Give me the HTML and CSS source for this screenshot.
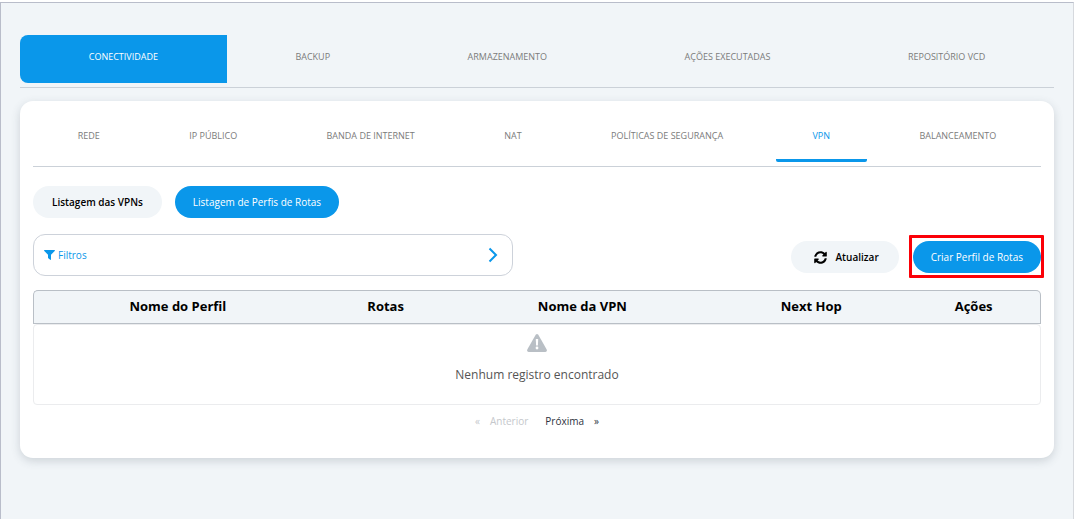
FILE: index.html
```
<!DOCTYPE html>
<html lang="pt-BR">
<head>
    <meta charset="UTF-8">
    <title>Perfis de Rotas</title>
    <link rel="stylesheet" href="styles.css">
</head>

<body>
    <main class="page">
        <nav class="main-tabs">
            <a class="active" href="#">CONECTIVIDADE</a>
            <a href="#">BACKUP</a>
            <a href="#">ARMAZENAMENTO</a>
            <a href="#">AÇÕES EXECUTADAS</a>
            <a href="#">REPOSITÓRIO VCD</a>
        </nav>

        <section class="card">
            <nav class="sub-tabs">
                <a href="#">REDE</a>
                <a href="#">IP PÚBLICO</a>
                <a href="#">BANDA DE INTERNET</a>
                <a href="#">NAT</a>
                <a href="#">POLÍTICAS DE SEGURANÇA</a>
                <a class="active" href="#">VPN</a>
                <a href="#">BALANCEAMENTO</a>
            </nav>

            <div class="lists">
                <button class="btn" type="button">Listagem das VPNs</button>
                <button class="btn btn-blue" type="button">Listagem de Perfis de Rotas</button>
            </div>

            <div class="toolbar">
                <button class="filter" type="button">
                    <svg width="11" height="10" viewBox="0 0 11 10"><path d="M.5 0h10q.8.3.2 1L7 4.800V9.500q-.2.700-.8.300L4.300 8.300Q4 8 4 7.600V4.800L.300 1Q-.3.300.500 0z" fill="currentColor"/></svg>
                    <span>Filtros</span>
                    <svg class="arrow" width="10" height="16" viewBox="0 0 10 16"><path d="M1.500 1.500L8 8l-6.500 6.500" fill="none" stroke="currentColor" stroke-width="2"/></svg>
                </button>
                <div class="actions">
                    <button class="btn btn-refresh" type="button">
                        <svg width="13" height="13" viewBox="0 0 512 512"><path fill="currentColor" d="M370.700 133.300C339.500 104 298.900 88 255.800 88c-77.500.1-144.300 53.200-162.800 126.900-1.300 5.400-6.100 9.100-11.700 9.100H24.100c-7.500 0-13.200-6.800-11.800-14.200C33.900 94.900 134.800 8 256 8c66.400 0 126.800 26.100 171.300 68.700L463 41c15.100-15.100 41-4.400 41 17v134c0 13.300-10.700 24-24 24H346c-21.400 0-32.100-25.900-17-41l41.700-41.700zM32 296h134c21.400 0 32.100 25.900 17 41l-41.800 41.800c31.300 29.300 71.800 45.300 114.900 45.300 77.400-.1 144.300-53.100 162.800-126.800 1.300-5.400 6.100-9.100 11.700-9.100h57.300c7.500 0 13.200 6.800 11.800 14.200C478.100 417.100 377.200 504 256 504c-66.400 0-126.800-26.100-171.300-68.700L49 471c-15.100 15.100-41 4.400-41-17V320c0-13.300 10.700-24 24-24z"/></svg>
                        Atualizar
                    </button>
                    <div class="highlight">
                        <button class="btn btn-blue" type="button">Criar Perfil de Rotas</button>
                    </div>
                </div>
            </div>

            <table class="profiles">
                <thead>
                    <tr>
                        <th>Nome do Perfil</th>
                        <th>Rotas</th>
                        <th>Nome da VPN</th>
                        <th>Next Hop</th>
                        <th>Ações</th>
                    </tr>
                </thead>
                <tbody>
                    <tr>
                        <td colspan="5">
                            <svg class="warning" width="20" height="18" viewBox="0 0 20 18"><path d="M8.700.8Q10-.7 11.300.8L19.700 15.500Q20.400 17.500 18.400 18H1.600Q-.4 17.500.300 15.500z" fill="#b9bfc5"/><path d="M8.800 5h2.400l-.3 6.500H9.100z" fill="#fff"/><circle cx="10" cy="14" r="1.400" fill="#fff"/></svg>
                            <p>Nenhum registro encontrado</p>
                        </td>
                    </tr>
                </tbody>
            </table>

            <div class="pager">
                <button type="button" disabled><span>«</span>Anterior</button>
                <button type="button">Próxima<span>»</span></button>
            </div>
        </section>
    </main>
</body>

</html>
```
FILE: styles.css
```
* {
    box-sizing: border-box;
}

body {
    margin: 0;
    padding: 2px 1px 0 0;
    min-height: 100vh;
    display: flex;
    background: #fff;
    font-family: "Open Sans", "Noto Sans", sans-serif;
    color: #000;
}

.page {
    flex: 1;
    padding: 32px 19px;
    background: #f1f5f8;
    border: solid #b9bdca;
    border-width: 1px 0 0 1px;
    border-right: 1px solid #d6d9de;
}

a {
    text-decoration: none;
    color: #7b7b7b;
}

button {
    font-family: inherit;
    border: 0;
    cursor: pointer;
}

/* tabs */
.main-tabs,
.sub-tabs {
    display: flex;
    font-size: 9px;
    text-align: center;
    border-bottom: 1px solid #cbd1d8;
}

.main-tabs a,
.sub-tabs a {
    flex: 1 1 auto;
    white-space: nowrap;
}

.main-tabs {
    padding-bottom: 4px;
}

.main-tabs a {
    line-height: 12px;
    padding: 16px 0 20px;
}

.main-tabs .active {
    color: #fff;
    background: #0a97ea;
    border-radius: 8px 0 0 8px;
}

.sub-tabs a {
    margin: 0 8px 4px;
    line-height: 12px;
    padding: 17px 0;
    border-bottom: 3px solid transparent;
    border-radius: 2px;
}

.sub-tabs .active {
    color: #0a97ea;
    border-bottom-color: #0a97ea;
}

/* card */
.card {
    margin-top: 13px;
    padding: 12px 13px 29px;
    background: #fff;
    border-radius: 13px;
    box-shadow: 0 3px 10px rgba(60, 75, 90, .2);
}

.btn {
    height: 32px;
    padding: 0 19px;
    border-radius: 16px;
    font-size: 10px;
    font-weight: 600;
    color: #000;
    background: #f1f5f8;
    white-space: nowrap;
}

.btn-blue {
    padding: 0 18px;
    font-weight: 400;
    color: #fff;
    background: #0a97ea;
}

.lists {
    display: flex;
    gap: 13px;
    margin-top: 19px;
}

.toolbar {
    display: flex;
    justify-content: space-between;
    margin-top: 16px;
}

.filter {
    display: flex;
    align-items: center;
    gap: 3px;
    width: 480px;
    height: 42px;
    padding: 0 14px 0 10px;
    border: 1px solid #cdd2da;
    border-radius: 12px;
    background: #fff;
    color: #0a97ea;
    font-size: 10px;
}

.arrow {
    margin-left: auto;
}

.actions {
    display: flex;
    align-items: flex-end;
    gap: 14px;
    padding-bottom: 3px;
}

.btn-refresh {
    display: flex;
    align-items: center;
    gap: 9px;
    padding: 0 20px 0 23px;
}

.highlight {
    position: relative;
    display: flex;
}

.highlight::after {
    content: "";
    position: absolute;
    top: -6px;
    right: -3px;
    bottom: -5px;
    left: -4px;
    border: 3px solid #fb0007;
    border-radius: 1px;
    pointer-events: none;
}

/* table */
.profiles {
    width: 100%;
    margin-top: 14px;
    border-collapse: separate;
    border-spacing: 0;
    text-align: center;
}

.profiles th {
    height: 34px;
    padding: 0 6px 2px;
    font-size: 13px;
    font-weight: 700;
    background: #f1f5f8;
    border: solid #b9bfc6;
    border-width: 1px 0;
}

.profiles th:first-child {
    border-left-width: 1px;
    border-top-left-radius: 5px;
}

.profiles th:last-child {
    border-right-width: 1px;
    border-top-right-radius: 5px;
}

.profiles td {
    padding: 9px 0 20px;
    border: 1px solid #ebecee;
    border-radius: 4px;
}

.warning {
    display: block;
    margin: 0 auto;
}

.profiles p {
    margin: 14px 0 0;
    font-size: 12px;
    line-height: 18px;
    color: #555;
}

.pager {
    display: flex;
    justify-content: center;
    gap: 17px;
    margin-top: 8px;
}

.pager button {
    display: flex;
    gap: 10px;
    padding: 0;
    background: none;
    font-size: 10px;
    line-height: 16px;
    color: #2c3240;
}

.pager button:disabled {
    color: #c5c8cc;
    cursor: default;
}
```
